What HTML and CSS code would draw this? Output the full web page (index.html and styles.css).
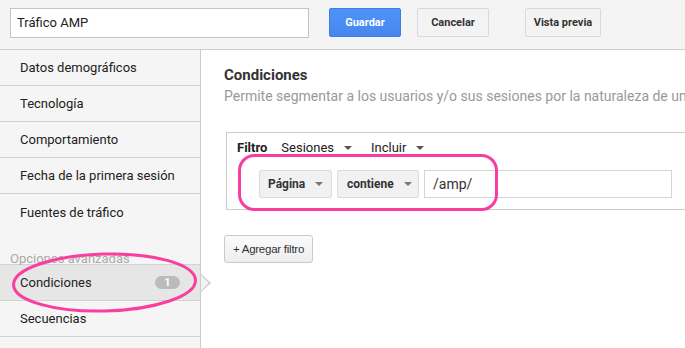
FILE: index.html
```html
<!DOCTYPE html>
<html lang="es">
<head>
<meta charset="utf-8">
<title>Tráfico AMP</title>
<link rel="stylesheet" href="styles.css">
</head>
<body>
<div class="page">
  <header class="topbar">
    <div class="name-input">Tráfico AMP</div>
    <button class="btn btn-primary">Guardar</button>
    <button class="btn btn-cancel">Cancelar</button>
    <button class="btn btn-preview">Vista previa</button>
  </header>
  <div class="main">
    <nav class="sidebar">
      <div class="nav-item">Datos demográficos</div>
      <div class="nav-item">Tecnología</div>
      <div class="nav-item">Comportamiento</div>
      <div class="nav-item">Fecha de la primera sesión</div>
      <div class="nav-item no-border">Fuentes de tráfico</div>
      <div class="nav-label">Opciones avanzadas</div>
      <div class="nav-item active">Condiciones <span class="badge">1</span></div>
      <div class="nav-item">Secuencias</div>
    </nav>
    <section class="content">
      <h2 class="title">Condiciones</h2>
      <p class="desc">Permite segmentar a los usuarios y/o sus sesiones por la naturaleza de un</p>
      <div class="filter-box">
        <div class="filter-head">
          <span class="filter-label">Filtro</span>
          <span class="drop">Sesiones <span class="caret"></span></span>
          <span class="drop">Incluir <span class="caret"></span></span>
        </div>
        <div class="filter-row">
          <span class="select sel-page">Página <span class="caret"></span></span>
          <span class="select sel-op">contiene <span class="caret"></span></span>
          <span class="value">/amp/</span>
        </div>
      </div>
      <button class="add-btn">+ Agregar filtro</button>
    </section>
  </div>
  <svg class="marks" width="685" height="348" viewBox="0 0 685 348">
    <rect x="239.5" y="155.5" width="257" height="54" rx="15" ry="15" fill="none" stroke="#f83e9f" stroke-width="3"/>
    <ellipse cx="104.5" cy="282.5" rx="91" ry="28.5" fill="none" stroke="#f83e9f" stroke-width="3" transform="rotate(-1.5 104.5 282.5)"/>
  </svg>
</div>
</body>
</html>
```

FILE: styles.css
```css
* { box-sizing: border-box; }
html, body { margin: 0; padding: 0; }
body {
  width: 685px;
  height: 348px;
  overflow: hidden;
  font-family: Roboto, "Liberation Sans", Arial, sans-serif;
  color: #222;
  background: #fff;
}
.page { position: relative; width: 685px; height: 348px; overflow: hidden; }

.topbar {
  height: 50px;
  background: #f4f4f4;
  border-bottom: 1px solid #cdcdcd;
  display: flex;
  align-items: flex-start;
  padding: 8px 0 0 10px;
}
.name-input {
  width: 299px;
  height: 30px;
  background: #fff;
  border: 1px solid #c4c4c4;
  font-size: 13px;
  line-height: 28px;
  padding-left: 6px;
  color: #222;
  margin-right: 20px;
}
.btn {
  height: 29px;
  border-radius: 2px;
  font-family: Roboto, "Liberation Sans", Arial, sans-serif;
  font-weight: bold;
  font-size: 11px;
  padding: 0;
  text-align: center;
  cursor: pointer;
}
.btn-primary {
  width: 72px;
  background: #4d8ff0;
  background-image: linear-gradient(#4e93f8, #4787ed);
  border: 1px solid #3f7de0;
  color: #fff;
  margin-right: 16px;
}
.btn-cancel, .btn-preview {
  background: #f3f3f3;
  border: 1px solid #d9d9d9;
  color: #333;
}
.btn-cancel { width: 72px; margin-right: 36px; }
.btn-preview { width: 76px; }

.main { display: flex; height: 298px; }
.sidebar {
  width: 201px;
  flex: none;
  background: #f5f5f5;
  border-right: 1px solid #cdcdcd;
}
.nav-item {
  position: relative;
  height: 36px;
  border-bottom: 1px solid #d2d2d2;
  padding-left: 20px;
  font-size: 13px;
  line-height: 35px;
  color: #222;
  display: flex;
  align-items: center;
  justify-content: space-between;
  padding-right: 20px;
}
.nav-item.no-border { border-bottom: none; height: 36px; }
.nav-label {
  height: 35px;
  border-bottom: 1px solid #d2d2d2;
  padding-left: 10px;
  font-size: 13px;
  color: #aaa;
  display: flex;
  align-items: flex-end;
  padding-bottom: 0;
  line-height: 11px;
}
.nav-item.active { background: #e6e6e6; }
.nav-item.active::before {
  content: "";
  position: absolute;
  right: -11px;
  top: 9px;
  border-left: 10px solid #c8c8c8;
  border-top: 9px solid transparent;
  border-bottom: 9px solid transparent;
}
.nav-item.active::after {
  content: "";
  position: absolute;
  right: -9px;
  top: 10px;
  border-left: 8px solid #f2f2f2;
  border-top: 8px solid transparent;
  border-bottom: 8px solid transparent;
}
.badge {
  display: inline-block;
  width: 25px;
  height: 13px;
  border-radius: 7px;
  background: #bbb;
  color: #fff;
  font-size: 11px;
  font-weight: bold;
  line-height: 13px;
  text-align: center;
}

.content {
  flex: 1;
  padding: 16px 0 0 23px;
  overflow: hidden;
  white-space: nowrap;
}
.title {
  margin: 0;
  font-size: 15px;
  font-weight: bold;
  line-height: 18px;
  color: #333;
}
.desc {
  margin: 3px 0 0;
  font-size: 14px;
  line-height: 18px;
  color: #999;
}
.filter-box {
  margin: 27px 0 0 2px;
  width: 520px;
  height: 78px;
  border: 1px solid #cdcdcd;
  padding: 7px 0 0 10px;
}
.filter-head {
  display: flex;
  align-items: center;
  font-size: 13px;
  line-height: 16px;
  color: #222;
}
.filter-label { font-weight: bold; margin-right: 14px; }
.drop { display: inline-flex; align-items: center; margin-right: 19px; }
.caret {
  display: inline-block;
  width: 0;
  height: 0;
  border-left: 4px solid transparent;
  border-right: 4px solid transparent;
  border-top: 4px solid #555;
  margin-left: 10px;
}
.filter-row {
  display: flex;
  margin: 14px 0 0 22px;
}
.select {
  height: 28px;
  background: #f1f1f1;
  border: 1px solid #dcdcdc;
  border-radius: 2px;
  font-size: 12px;
  font-weight: bold;
  color: #333;
  display: inline-flex;
  align-items: center;
  justify-content: space-between;
  padding: 0 9px 0 8px;
  margin-right: 5px;
}
.select .caret { border-top-color: #777; }
.sel-page { width: 73px; }
.sel-op { width: 82px; padding-left: 9px; }
.value {
  width: 248px;
  height: 28px;
  border: 1px solid #d4d4d4;
  font-size: 14px;
  line-height: 26px;
  padding-left: 8px;
  color: #333;
}
.add-btn {
  display: block;
  margin-top: 25px;
  width: 89px;
  height: 28px;
  border: 1px solid #cacaca;
  border-radius: 3px;
  background-image: linear-gradient(#fbfbfb, #eeeeee);
  font-family: "Liberation Sans", Arial, sans-serif;
  font-size: 11.5px;
  letter-spacing: -0.25px;
  color: #333;
  padding: 0;
  text-align: center;
}
.marks {
  position: absolute;
  left: 0;
  top: 0;
  pointer-events: none;
}
```
